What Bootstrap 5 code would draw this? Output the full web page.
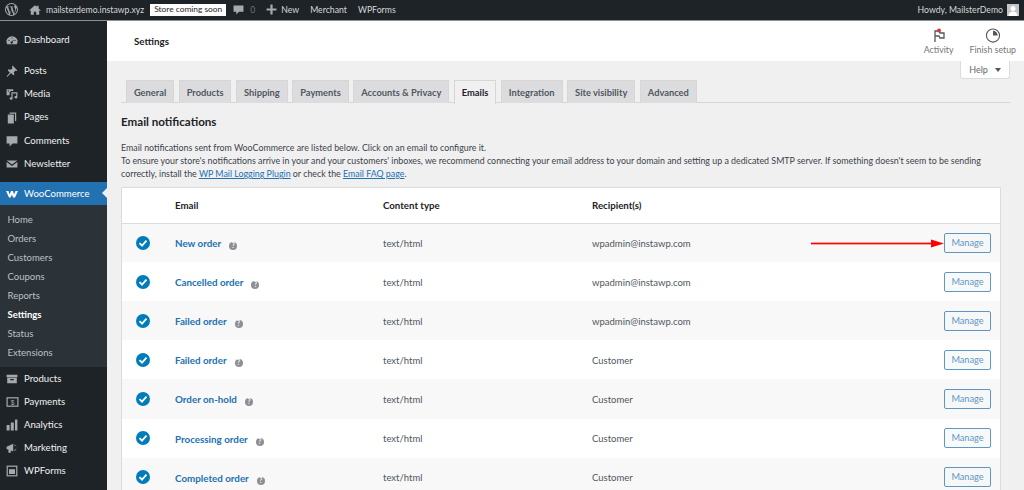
<!DOCTYPE html>
<html lang="en">
<head>
<meta charset="utf-8">
<title>Settings</title>
<link href="https://cdn.jsdelivr.net/npm/bootstrap@5.3.0/dist/css/bootstrap.min.css" rel="stylesheet">
<style>
html,body{height:490px;overflow:hidden}
body{font-family:"Lato","Noto Sans",sans-serif;font-size:9.5px;background:#f0f0f1;color:#3c434a}
.wp-bar{height:21px;background:#1d2327;border-bottom:1px solid #8c8f94;color:#d5d8da;font-size:8.7px;padding:0 5px 0 5px}
.wp-bar svg{fill:#a7aaad;display:block}
.soon{background:#fff;color:#1d2327;padding:0 4px;height:12px;line-height:11px;font-size:8.4px}
.shell{height:469px}
.side{width:107px;flex:none;background:#1d2327;color:#f0f0f1;font-size:9.6px;padding-top:8px}
.side svg{fill:#a7aaad;flex:none;display:block}
.mi{height:23.2px;padding-left:6px;gap:6px}
.mi-gap{margin-bottom:7.5px}
.mi-on{background:#2271b1;color:#fff;margin-top:6.5px;position:relative}
.mi-on::after{content:"";position:absolute;right:0;top:6px;border:5.5px solid transparent;border-right-color:#f0f0f1}
.subm{background:#2c3338;padding:4.8px 0 5px;color:#bcc0c3;font-size:9.5px;margin-bottom:.5px}
.subm div{height:18.95px;line-height:19px;padding-left:7.5px}
.subm .cur{color:#fff;font-weight:700}
.main{min-width:0}
.top-h{height:40px;background:#fff;padding:0 8px 0 27px;color:#1d2327}
.top-h .ttl{font-size:9.8px;font-weight:700}
.act{color:#757575;font-size:8.8px;text-align:center;line-height:11px;padding-top:1px}
.act svg{display:block;margin:0 auto 1px}
.help-tab{position:absolute;right:14px;top:0;width:50px;height:18px;background:#fff;border:1px solid #dcdcde;border-top:0;border-radius:0 0 3px 3px;color:#646970;font-size:9px;gap:7px}
.caret{border:3px solid transparent;border-top:4px solid #50575e;border-bottom:0}
.body-w{padding:19px 14px 0 14px;position:relative}
.tabs-w{border-bottom:1px solid #d6d6d6;height:23px;gap:4.7px;padding-left:5px}
.tb{height:23px;background:#dcdcde;border:1px solid #d6d6d6;border-bottom:0;color:#50575e;font-weight:700;font-size:9.3px;line-height:23px;padding:0 6.9px}
.tb-on{background:#f0f0f1;color:#1d2327;height:24px;position:relative;border-color:#d6d6d6}
.h-em{font-size:11.6px;font-weight:700;color:#1d2327;margin:10px 0 0;line-height:17px}
.intro{margin:10.5px 9px 0 0;font-size:8.85px;line-height:13.2px;color:#3c434a}
.intro2{margin:0 9px 0 0;font-size:8.85px;line-height:13.2px;color:#3c434a}
.intro2 a{color:#2271b1}
.tbl-box{margin:7px 9px 0 0;background:#fff;border:1px solid #dcdcde;border-bottom:0;position:relative}
.em-t{table-layout:fixed;margin:0;font-size:9.5px;--bs-table-bg:transparent}
.em-t th{height:35px;border-bottom:1px solid #dcdcde;font-weight:700;color:#1d2327;padding:0;vertical-align:middle;font-size:9.7px}
.em-t td{height:39.1px;padding:2px 0 0;border:0;vertical-align:middle;color:#50575e}
.em-t tbody tr:nth-child(odd) td{background:#f8f8f8}
.em-t .nm{font-weight:700;color:#2271b1;font-size:9.8px;margin-right:8px}
.qm{display:inline-block;width:8px;height:8px;border-radius:50%;background:#8c8f94;color:#fff;font-size:6.5px;font-weight:700;line-height:8px;text-align:center;vertical-align:-1px}
.chk{display:block;margin-left:14px;margin-top:-2px}
.mng{display:block;width:47px;height:20.5px;padding:0;margin:-2px 9px 0 auto;font-size:9.2px;line-height:18px;color:#2271b1;border:1px solid #2271b1;border-radius:2px;background:#f6f7f7;opacity:.72}
.arrow{position:absolute;left:689px;top:51px}
</style>
</head>
<body>
<div class="wp-bar d-flex align-items-center justify-content-between">
  <div class="d-flex align-items-center">
    <svg width="13" height="13" viewBox="0 0 20 20"><path d="M10 0a10 10 0 1 0 0 20 10 10 0 0 0 0-20zM1.6 10c0-1.2.3-2.4.7-3.400l4 11A8.400 8.400 0 0 1 1.600 10zm8.400 8.400c-.8 0-1.600-.1-2.400-.3l2.500-7.400 2.600 7.100.1.100c-.9.300-1.800.5-2.800.5zm1.200-12.300c.5 0 1-.1 1-.1.500-.1.400-.7 0-.7 0 0-1.400.1-2.300.1-.9 0-2.300-.1-2.300-.1-.5 0-.5.700 0 .7 0 0 .400.100.9.100l1.300 3.700-1.900 5.600-3.100-9.300c.5 0 1-.1 1-.1.500-.1.400-.7 0-.7 0 0-1.400.1-2.300.1h-.6A8.400 8.400 0 0 1 15.700 3.900h-.1c-.9 0-1.500.8-1.500 1.600 0 .7.400 1.300.9 2.100.3.600.7 1.400.7 2.500 0 .8-.3 1.700-.7 3l-.9 3.100zm3.100 11.200l2.600-7.400c.5-1.200.6-2.200.6-3 0-.3 0-.6-.1-.9a8.400 8.400 0 0 1-3.100 11.300z"/></svg>
    <svg width="12" height="12" viewBox="0 0 20 20" style="margin-left:11px"><path d="M10 2 0 11h3v7h5v-5h4v5h5v-7h3l-4-3.600V3h-3v1.700z"/></svg>
    <span style="margin-left:5px">mailsterdemo.instawp.xyz</span>
    <span class="soon" style="margin-left:6px">Store coming soon</span>
    <svg style="margin-left:7px" width="11" height="12" viewBox="0 0 20 20"><path d="M1 2h18v11h-8l-5 5v-5H1z"/></svg>
    <span class="text-secondary" style="margin-left:6px">0</span>
    <svg style="margin-left:11px" width="11" height="11" viewBox="0 0 20 20"><path d="M8 1h4v7h7v4h-7v7H8v-7H1V8h7z"/></svg>
    <span style="margin-left:4px">New</span>
    <span style="margin-left:11px">Merchant</span>
    <span style="margin-left:11px">WPForms</span>
  </div>
  <div class="d-flex align-items-center gap-1">
    <span>Howdy, MailsterDemo</span>
    <svg width="12" height="12" viewBox="0 0 12 12" style="fill:none"><rect width="12" height="12" fill="#c3c4c7"/><circle cx="6" cy="4.500" r="2.500" fill="#fff"/><path d="M1.500 12c0-3 2-4.500 4.500-4.500s4.500 1.500 4.500 4.500z" fill="#fff"/></svg>
  </div>
</div>
<div class="shell d-flex">
  <nav class="side">
    <div class="mi mi-gap d-flex align-items-center"><svg width="12" height="12" viewBox="0 0 20 20"><path d="M10 2a9 9 0 0 0-8 13.500h16A9 9 0 0 0 10 2zm0 2a1 1 0 1 1 0 2 1 1 0 0 1 0-2zM5 8a1 1 0 1 1 0 2 1 1 0 0 1 0-2zm10 0a1 1 0 1 1 0 2 1 1 0 0 1 0-2zm-1.500-1L11 12a1.800 1.800 0 1 1-1.500-1z"/></svg>Dashboard</div>
    <div class="mi d-flex align-items-center"><svg width="12" height="12" viewBox="0 0 20 20"><path d="M11 1l8 8-2 1-1-1-3 3 1 4-2 1-3.500-3.500L2 20l-1-1 5.500-6.500L3 9l1-2 4 1 3-3-1-1z"/></svg>Posts</div>
    <div class="mi d-flex align-items-center"><svg width="12" height="12" viewBox="0 0 20 20"><path d="M1 2h11v3H8L6 7v5H1zm2 2v2h2V4zm6 3h10v8.500a2.500 2 0 1 1-2-2V9h-6v8.500a2.500 2 0 1 1-2-2z"/></svg>Media</div>
    <div class="mi d-flex align-items-center"><svg width="12" height="12" viewBox="0 0 20 20"><path d="M6 1h11v14h-2V3H6zM3 4h10v15H3z"/></svg>Pages</div>
    <div class="mi d-flex align-items-center"><svg width="12" height="12" viewBox="0 0 20 20"><path d="M1 2h18v12h-8l-5 5v-5H1z"/></svg>Comments</div>
    <div class="mi d-flex align-items-center"><svg width="12" height="12" viewBox="0 0 20 20"><path d="M1 4h18l-9 7zm0 2.500 9 7 9-7V16H1z"/></svg>Newsletter</div>
    <div class="mi mi-on d-flex align-items-center"><svg width="12" height="8" viewBox="0 0 24 14"><path d="M0 1h5l2 7 3-7h4l2 7 3-7h5l-6 13h-4l-2-6-3 6H6z" style="fill:#fff"/></svg>WooCommerce</div>
    <div class="subm">
      <div>Home</div><div>Orders</div><div>Customers</div><div>Coupons</div><div>Reports</div><div class="cur">Settings</div><div>Status</div><div>Extensions</div>
    </div>
    <div class="mi d-flex align-items-center"><svg width="12" height="12" viewBox="0 0 20 20"><path d="M1 3h18v4H1zm1 5h16v9H2zm5 2v2h6v-2z"/></svg>Products</div>
    <div class="mi d-flex align-items-center"><svg width="13" height="12" viewBox="0 0 20 20" style="fill:none"><rect x="1" y="3" width="18" height="14" stroke="#a7aaad" stroke-width="2"/><text x="10" y="14.500" font-size="11" text-anchor="middle" fill="#a7aaad" font-family="Liberation Sans">$</text></svg><span style="margin-left:-1px">Payments</span></div>
    <div class="mi d-flex align-items-center"><svg width="12" height="12" viewBox="0 0 20 20"><path d="M1 10h5v9H1zm7-4h5v13H8zm7-5h4v18h-4z"/></svg>Analytics</div>
    <div class="mi d-flex align-items-center"><svg width="12" height="12" viewBox="0 0 20 20"><path d="M1 8l11-5v13L8 14v4H4v-5.500L1 12zm13-4a6 6 0 0 1 0 11V13a3.500 3.500 0 0 0 0-7z"/></svg>Marketing</div>
    <div class="mi d-flex align-items-center"><svg width="12" height="12" viewBox="0 0 20 20" style="fill:none"><rect x="2" y="2" width="16" height="16" stroke="#a7aaad" stroke-width="2"/><path d="M5 7h10v8H5z" fill="#a7aaad"/></svg>WPForms</div>
  </nav>
  <main class="main flex-grow-1">
    <div class="top-h d-flex align-items-center justify-content-between">
      <span class="ttl">Settings</span>
      <div class="d-flex" style="gap:16px">
        <div class="act"><svg width="14" height="15" viewBox="0 0 14 15" style="fill:none"><path d="M3 14V3h4l1 2h4v5H8L7 8H3" stroke="#50575e" stroke-width="1.300"/><circle cx="7" cy="2.500" r="2" fill="#d63638"/></svg>Activity</div>
        <div class="act"><svg width="16" height="15" viewBox="0 0 16 16" style="fill:none"><circle cx="8" cy="8" r="7" stroke="#50575e" stroke-width="1.200"/><path d="M8 3a5 5 0 0 1 5 5H8z" fill="#50575e"/></svg>Finish setup</div>
      </div>
    </div>
    <div class="body-w">
      <div class="help-tab d-flex align-items-center justify-content-center">Help<span class="caret"></span></div>
      <div class="tabs-w d-flex">
        <div class="tb">General</div><div class="tb">Products</div><div class="tb">Shipping</div><div class="tb">Payments</div><div class="tb">Accounts &amp; Privacy</div><div class="tb tb-on">Emails</div><div class="tb">Integration</div><div class="tb">Site visibility</div><div class="tb">Advanced</div>
      </div>
      <h2 class="h-em">Email notifications</h2>
      <p class="intro mb-0">Email notifications sent from WooCommerce are listed below. Click on an email to configure it.<br>To ensure your store's notifications arrive in your and your customers' inboxes, we recommend connecting your email address to your domain and setting up a dedicated SMTP server. If something doesn't seem to be sending</p>
      <p class="intro2">correctly, install the <a href="#">WP Mail Logging Plugin</a> or check the <a href="#">Email FAQ page</a>.</p>
      <div class="tbl-box">
        <svg class="arrow" width="133" height="10" viewBox="0 0 133 10"><path d="M0 4h120V5H0z" fill="#f00" stroke="#f00" stroke-width=".7"/><path d="M120 .5 133 4.500 120 8.500z" fill="#f00"/></svg>
        <table class="table em-t">
          <colgroup><col style="width:53px"><col style="width:208px"><col style="width:209px"><col><col style="width:70px"></colgroup>
          <thead><tr><th></th><th>Email</th><th>Content type</th><th>Recipient(s)</th><th></th></tr></thead>
          <tbody>
            <tr><td><svg class="chk" width="14" height="14" viewBox="0 0 14 14"><circle cx="7" cy="7" r="7" fill="#007cba"/><path d="M3.500 7.200 6 9.700l4.500-5" stroke="#fff" stroke-width="1.800" fill="none"/></svg></td><td><span class="nm">New order</span><span class="qm">?</span></td><td>text/html</td><td>wpadmin@instawp.com</td><td><button class="btn mng">Manage</button></td></tr>
            <tr><td><svg class="chk" width="14" height="14" viewBox="0 0 14 14"><circle cx="7" cy="7" r="7" fill="#007cba"/><path d="M3.500 7.200 6 9.700l4.500-5" stroke="#fff" stroke-width="1.800" fill="none"/></svg></td><td><span class="nm">Cancelled order</span><span class="qm">?</span></td><td>text/html</td><td>wpadmin@instawp.com</td><td><button class="btn mng">Manage</button></td></tr>
            <tr><td><svg class="chk" width="14" height="14" viewBox="0 0 14 14"><circle cx="7" cy="7" r="7" fill="#007cba"/><path d="M3.500 7.200 6 9.700l4.500-5" stroke="#fff" stroke-width="1.800" fill="none"/></svg></td><td><span class="nm">Failed order</span><span class="qm">?</span></td><td>text/html</td><td>wpadmin@instawp.com</td><td><button class="btn mng">Manage</button></td></tr>
            <tr><td><svg class="chk" width="14" height="14" viewBox="0 0 14 14"><circle cx="7" cy="7" r="7" fill="#007cba"/><path d="M3.500 7.200 6 9.700l4.500-5" stroke="#fff" stroke-width="1.800" fill="none"/></svg></td><td><span class="nm">Failed order</span><span class="qm">?</span></td><td>text/html</td><td>Customer</td><td><button class="btn mng">Manage</button></td></tr>
            <tr><td><svg class="chk" width="14" height="14" viewBox="0 0 14 14"><circle cx="7" cy="7" r="7" fill="#007cba"/><path d="M3.500 7.200 6 9.700l4.500-5" stroke="#fff" stroke-width="1.800" fill="none"/></svg></td><td><span class="nm">Order on-hold</span><span class="qm">?</span></td><td>text/html</td><td>Customer</td><td><button class="btn mng">Manage</button></td></tr>
            <tr><td><svg class="chk" width="14" height="14" viewBox="0 0 14 14"><circle cx="7" cy="7" r="7" fill="#007cba"/><path d="M3.500 7.200 6 9.700l4.500-5" stroke="#fff" stroke-width="1.800" fill="none"/></svg></td><td><span class="nm">Processing order</span><span class="qm">?</span></td><td>text/html</td><td>Customer</td><td><button class="btn mng">Manage</button></td></tr>
            <tr><td><svg class="chk" width="14" height="14" viewBox="0 0 14 14"><circle cx="7" cy="7" r="7" fill="#007cba"/><path d="M3.500 7.200 6 9.700l4.500-5" stroke="#fff" stroke-width="1.800" fill="none"/></svg></td><td><span class="nm">Completed order</span><span class="qm">?</span></td><td>text/html</td><td>Customer</td><td><button class="btn mng">Manage</button></td></tr>
          </tbody>
        </table>
      </div>
    </div>
  </main>
</div>
<script src="https://cdn.jsdelivr.net/npm/bootstrap@5.3.0/dist/js/bootstrap.bundle.min.js"></script>
</body>
</html>
